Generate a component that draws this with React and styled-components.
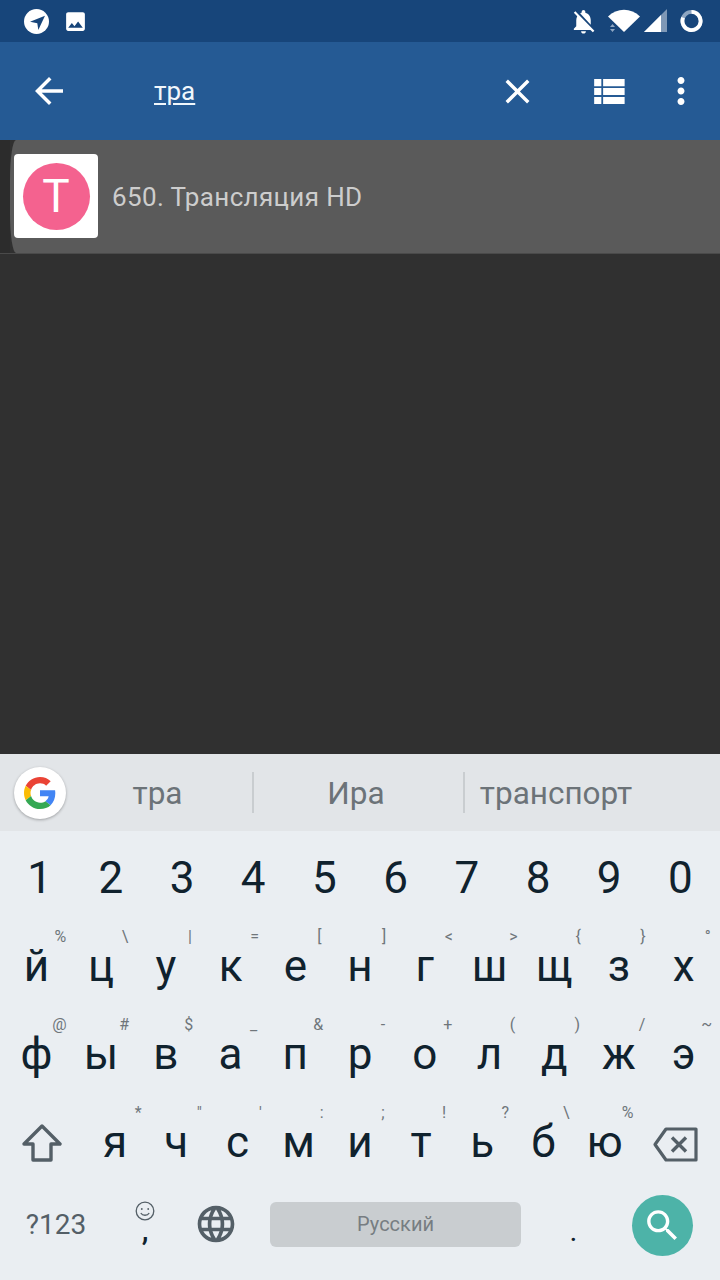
import React from "react";
import styled, { createGlobalStyle } from "styled-components";

const Global = createGlobalStyle`
  html, body { margin: 0; padding: 0; background: #303030; }
  body { font-family: Roboto, "Noto Sans", sans-serif; }
`;

const Screen = styled.div`
  width: 720px; height: 1280px; display: flex; flex-direction: column; overflow: hidden; background: #303030;
`;
const StatusBar = styled.div`
  height: 42px; flex: none; background: #17457a; display: flex; align-items: center; padding: 0 17px 0 24px;
`;
const StatusLeft = styled.div`display: flex; align-items: center; gap: 14px; flex: 1;`;
const StatusRight = styled.div`display: flex; align-items: center;`;
const StatusIcon = styled.div`display: flex; margin-left: ${p => p.$ml || 0}px;`;

const AppBar = styled.div`
  height: 98px; flex: none; background: #255a94; display: flex; align-items: center; color: #fff; padding-right: 17px;
`;
const IconBtn = styled.div`
  width: ${p => p.$w}px; flex: none; display: flex; justify-content: center; align-items: center;
`;
const Query = styled.div`
  flex: 1; padding-left: 56px; font-size: 26px; color: #f1f7fc; text-decoration: underline; text-decoration-thickness: 2px; text-underline-offset: 3px; line-height: 30px;
`;

const Content = styled.div`flex: 1; background: #303030;`;
const ResultRow = styled.div`
  height: 114px; display: flex; align-items: stretch; background: #303030; border-bottom: 1px solid #4a4a4a; box-sizing: border-box;
`;
const Edge = styled.div`width: 10px; flex: none; background: #2c2c2c;`;
const ResultBody = styled.div`
  flex: 1; background: #5a5a5a; display: flex; align-items: center; padding: 0 0 1px 4px; border-top-left-radius: 6px 40px; border-bottom-left-radius: 6px 40px;
`;
const Card = styled.div`
  width: 84px; height: 84px; background: #fff; border-radius: 4px; display: flex; align-items: center; justify-content: center; flex: none;
`;
const Avatar = styled.div`
  width: 67px; height: 67px; border-radius: 50%; background: #f4628f; color: #fff; display: flex; align-items: center; justify-content: center; font-size: 46px; font-weight: 400; line-height: 1;
`;
const Title = styled.div`margin-left: 14px; padding-top: 2px; font-size: 26px; color: #cdcdcd; letter-spacing: 0.35px;`;

const Keyboard = styled.div`height: 526px; flex: none; background: #eaeef2; display: flex; flex-direction: column;`;
const Strip = styled.div`
  height: 77px; flex: none; background: #e2e5e8; display: flex; align-items: center; position: relative;
`;
const GoogleBadge = styled.div`
  width: 52px; height: 52px; margin: 0 11px 0 14px; border-radius: 50%; background: #fff; box-shadow: 0 1px 3px rgba(0,0,0,.3); display: flex; align-items: center; justify-content: center; flex: none;
`;
const Word = styled.div`
  width: ${p => p.$w}px; flex: none; box-sizing: border-box; text-align: center; font-size: 31.5px; color: #6c7378; line-height: 40px; padding: 2px ${p => p.$pr || 0}px 0 0;
`;
const Sep = styled.div`width: 2px; height: 41px; background: #c9cdd0; flex: none;`;

const Rows = styled.div`display: flex; flex-direction: column; padding-top: 2px;`;
const KeyRow = styled.div`
  height: ${p => p.$h || 88}px; display: flex; padding: ${p => p.$pad || "0"};
`;
const Key = styled.div`
  flex: ${p => p.$w ? `0 0 ${p.$w}px` : "1 1 0"}; box-sizing: border-box; position: relative; display: flex; align-items: center; justify-content: center;
  padding: ${p => p.$pt || 0}px 0 ${p => p.$pb || 0}px;
  font-size: 44px; color: #10222e; line-height: 1;
`;
const Hint = styled.span`
  position: absolute; top: 5px; left: calc(50% + ${p => p.$dx}px); transform: translateX(-50%); font-size: 16px; line-height: 20px; color: #6f767b;
`;
const Sym = styled.div`font-size: 28px; color: #545f67; line-height: 1;`;
const EmojiKey = styled.div`display: flex; flex-direction: column; align-items: center; color: #10222e;`;
const Comma = styled.span`font-size: 30px; line-height: 22px; font-weight: 500; color: #10222e; margin-top: -2px;`;
const Space = styled.div`
  width: 251px; height: 45px; background: #c9cdd0; border-radius: 6px; flex: none; align-self: center; display: flex; align-items: center; justify-content: center; font-size: 20px; color: #777d82;
`;
const Dot = styled.div`font-size: 30px; color: #10222e; padding-top: 14px;`;
const SearchFab = styled.div`
  width: 61px; height: 61px; border-radius: 50%; background: #4db3a8; display: flex; align-items: center; justify-content: center;
`;

const Ic = ({ d, size = 24, fill = "#fff" }) => (
  <svg width={size} height={size} viewBox="0 0 24 24" fill={fill}><path d={d} /></svg>
);

const P = {
  back: "M20 11H7.83l5.59-5.59L12 4l-8 8 8 8 1.41-1.41L7.83 13H20v-2z",
  close: "M19 6.41L17.59 5 12 10.59 6.41 5 5 6.41 10.59 12 5 17.59 6.41 19 12 13.41 17.59 19 19 17.59 13.41 12z",
  list: "M4 14h4v-4H4v4zm0 5h4v-4H4v4zM4 9h4V5H4v4zm5 5h12v-4H9v4zm0 5h12v-4H9v4zM9 5v4h12V5H9z",
  more: "M12 8c1.1 0 2-.9 2-2s-.9-2-2-2-2 .9-2 2 .9 2 2 2zm0 2c-1.1 0-2 .9-2 2s.9 2 2 2 2-.9 2-2-.9-2-2-2zm0 6c-1.1 0-2 .9-2 2s.9 2 2 2 2-.9 2-2-.9-2-2-2z",
  photo: "M21 19V5c0-1.1-.9-2-2-2H5c-1.1 0-2 .9-2 2v14c0 1.1.9 2 2 2h14c1.1 0 2-.9 2-2zM8.5 13.5l2.5 3.01L14.5 12l4.5 6H5l3.5-4.5z",
  bell: "M20 18.69L7.84 6.14 5.27 3.49 4 4.76l2.8 2.8v.01c-.52.99-.8 2.16-.8 3.42v5l-2 2v1h13.73l2 2L21 19.72l-1-1.03zM12 22c1.11 0 2-.89 2-2h-4c0 1.11.89 2 2 2zm6-7.32V11c0-3.08-1.64-5.64-4.5-6.32V4c0-.83-.67-1.5-1.5-1.5s-1.5.67-1.5 1.5v.68c-.15.03-.29.08-.42.12-.1.03-.2.07-.3.11h-.01c-.2.08-.4.17-.59.27-.01 0-.01 0-.02.01L18 14.68z",
  search: "M15.5 14h-.79l-.28-.27C15.41 12.59 16 11.11 16 9.5 16 5.91 13.09 3 9.5 3S3 5.91 3 9.5 5.91 16 9.5 16c1.61 0 3.09-.59 4.23-1.57l.27.28v.79l5 4.99L20.49 19l-4.99-5zm-6 0C7.01 14 5 11.99 5 9.5S7.01 5 9.5 5 14 7.01 14 9.5 11.99 14 9.5 14z",
  globe: "M11.99 2C6.47 2 2 6.48 2 12s4.47 10 9.99 10C17.52 22 22 17.52 22 12S17.52 2 11.99 2zm6.93 6h-2.95c-.32-1.25-.78-2.45-1.38-3.56 1.84.63 3.37 1.91 4.33 3.56zM12 4.04c.83 1.2 1.48 2.53 1.91 3.96h-3.82c.43-1.43 1.08-2.76 1.91-3.96zM4.26 14C4.1 13.36 4 12.69 4 12s.1-1.36.26-2h3.38c-.08.66-.14 1.32-.14 2 0 .68.06 1.34.14 2H4.26zm.82 2h2.95c.32 1.25.78 2.45 1.38 3.56-1.84-.63-3.37-1.9-4.33-3.56zm2.95-8H5.08c.96-1.66 2.49-2.93 4.33-3.56C8.81 5.55 8.35 6.75 8.03 8zM12 19.96c-.83-1.2-1.48-2.53-1.91-3.96h3.82c-.43 1.43-1.08 2.76-1.91 3.96zM14.34 14H9.66c-.09-.66-.16-1.32-.16-2 0-.68.07-1.35.16-2h4.68c.09.65.16 1.32.16 2 0 .68-.07 1.34-.16 2zm.25 5.56c.6-1.11 1.06-2.31 1.38-3.56h2.95c-.96 1.65-2.49 2.93-4.33 3.56zM16.36 14c.08-.66.14-1.32.14-2 0-.68-.06-1.34-.14-2h3.38c.16.64.26 1.31.26 2s-.1 1.36-.26 2h-3.38z",
};

const TelegramBadge = () => (
  <svg width="25" height="25" viewBox="0 0 25 25">
    <circle cx="12.5" cy="12.5" r="12.5" fill="#fff" />
    <path d="M21 6.7 L6 12.7 L13.3 14.3 L14.3 21 Z" fill="#17457a" />
  </svg>
);
const Wifi = () => (
  <svg width="32" height="24" viewBox="0 0 32 24">
    <path d="M0 7.5 C9 -1.5 23 -1.5 32 7.5 L16 23 Z" fill="#fff" />
    <path d="M2 18l2.5-3 2.5 3zM2 20l2.5 3 2.5-3z" fill="#8ea6c2" />
  </svg>
);
const Signal = () => (
  <svg width="23" height="24" viewBox="0 0 23 24">
    <path d="M0 23 L23 0 V23 Z" fill="#7f98b6" />
    <path d="M0 23 L17 6 V23 Z" fill="#fff" />
  </svg>
);
const Ring = () => (
  <svg width="23" height="24" viewBox="0 0 24 24">
    <circle cx="12" cy="12" r="9.5" fill="none" stroke="#8ea6c2" strokeWidth="4" />
    <path d="M12 2.5 A9.5 9.5 0 1 1 3.2 8.5" fill="none" stroke="#fff" strokeWidth="4" />
  </svg>
);
const GoogleG = () => (
  <svg width="32" height="32" viewBox="0 0 48 48">
    <path fill="#EA4335" d="M24 9.5c3.54 0 6.71 1.22 9.21 3.6l6.85-6.85C35.9 2.38 30.47 0 24 0 14.62 0 6.51 5.38 2.56 13.22l7.98 6.19C12.43 13.72 17.74 9.5 24 9.5z" />
    <path fill="#4285F4" d="M46.98 24.55c0-1.57-.15-3.09-.38-4.55H24v9.02h12.94c-.58 2.96-2.26 5.48-4.78 7.18l7.73 6c4.51-4.18 7.09-10.36 7.09-17.65z" />
    <path fill="#FBBC05" d="M10.53 28.59c-.48-1.45-.76-2.99-.76-4.59s.27-3.14.76-4.59l-7.98-6.19C.92 16.46 0 20.12 0 24c0 3.88.92 7.54 2.56 10.78l7.97-6.19z" />
    <path fill="#34A853" d="M24 48c6.48 0 11.93-2.13 15.89-5.81l-7.73-6c-2.15 1.45-4.92 2.3-8.16 2.3-6.26 0-11.57-4.22-13.47-9.91l-7.98 6.19C6.51 42.62 14.62 48 24 48z" />
  </svg>
);
const Shift = () => (
  <svg width="40" height="38" viewBox="0 0 40 38" fill="none" stroke="#545f67" strokeWidth="3.4" strokeLinejoin="round">
    <path d="M20 2 L38 20 H29 V36 H11 V20 H2 Z" />
  </svg>
);
const Backspace = () => (
  <svg width="45" height="35" viewBox="0 0 45 35" fill="none" stroke="#545f67" strokeLinejoin="round">
    <path d="M43 2 H13 L2 17.5 L13 33 H43 Z" strokeWidth="3.2" />
    <path d="M19 10.5 L33 24.5 M33 10.5 L19 24.5" strokeWidth="3.4" />
  </svg>
);
const Smile = () => (
  <svg width="20" height="20" viewBox="0 0 20 20" fill="none" stroke="#545f67" strokeWidth="1.3">
    <circle cx="10" cy="10" r="8.8" />
    <circle cx="6.8" cy="8" r=".9" fill="#545f67" stroke="none" />
    <circle cx="13.2" cy="8" r=".9" fill="#545f67" stroke="none" />
    <path d="M5.8 12 C7.5 15 12.5 15 14.2 12" />
  </svg>
);

const digits = "1234567890".split("");
const row2 = [["й","%"],["ц","\\"],["у","|"],["к","="],["е","["],["н","]"],["г","<"],["ш",">"],["щ","{"],["з","}"],["х","°"]];
const row3 = [["ф","@"],["ы","#"],["в","$"],["а","_"],["п","&"],["р","-"],["о","+"],["л","("],["д",")"],["ж","/"],["э","~"]];
const row4 = [["я","*"],["ч","\""],["с","'"],["м",":"],["и",";"],["т","!"],["ь","?"],["б","\\"],["ю","%"]];

export default function App() {
  return (
    <Screen>
      <Global />
      <StatusBar>
        <StatusLeft>
          <TelegramBadge />
          <Ic d={P.photo} size={25} />
        </StatusLeft>
        <StatusRight>
          <StatusIcon><Ic d={P.bell} size={29} /></StatusIcon>
          <StatusIcon $ml={10}><Wifi /></StatusIcon>
          <StatusIcon $ml={4}><Signal /></StatusIcon>
          <StatusIcon $ml={13}><Ring /></StatusIcon>
        </StatusRight>
      </StatusBar>
      <AppBar>
        <IconBtn $w={98}><Ic d={P.back} size={42} /></IconBtn>
        <Query>тра</Query>
        <IconBtn $w={80}><Ic d={P.close} size={41} /></IconBtn>
        <IconBtn $w={102}><Ic d={P.list} size={43} /></IconBtn>
        <IconBtn $w={44}><Ic d={P.more} size={42} /></IconBtn>
      </AppBar>
      <Content>
        <ResultRow>
          <Edge />
          <ResultBody>
            <Card><Avatar>T</Avatar></Card>
            <Title>650. Трансляция HD</Title>
          </ResultBody>
        </ResultRow>
      </Content>
      <Keyboard>
        <Strip>
          <GoogleBadge><GoogleG /></GoogleBadge>
          <Word $w={175} $pr={14}>тра</Word>
          <Sep />
          <Word $w={209} $pr={5}>Ира</Word>
          <Sep />
          <Word $w={182}>транспорт</Word>
        </Strip>
        <Rows>
          <KeyRow $h={89} $pad="0 4px">
            {digits.map(d => <Key key={d}>{d}</Key>)}
          </KeyRow>
          <KeyRow $pad="0 4px">
            {row2.map(([k, h]) => <Key key={k}>{k}<Hint $dx={24}>{h}</Hint></Key>)}
          </KeyRow>
          <KeyRow $pad="0 4px">
            {row3.map(([k, h]) => <Key key={k}>{k}<Hint $dx={23}>{h}</Hint></Key>)}
          </KeyRow>
          <KeyRow>
            <Key $w={84.5} $pt={2}><Shift /></Key>
            {row4.map(([k, h]) => <Key key={k} $w={61.2}>{k}<Hint $dx={23}>{h}</Hint></Key>)}
            <Key $w={81.4} $pt={4}><Backspace /></Key>
          </KeyRow>
          <KeyRow $h={76}>
            <Key $w={112} $pt={2}><Sym>?123</Sym></Key>
            <Key $w={66} $pb={6}><EmojiKey><Smile /><Comma>,</Comma></EmojiKey></Key>
            <Key $w={76}><Ic d={P.globe} size={44} fill="#545f67" /></Key>
            <Key $w={16} />
            <Space>Русский</Space>
            <Key $w={105}><Dot>.</Dot></Key>
            <Key $w={72} $pt={3}><SearchFab><Ic d={P.search} size={41} /></SearchFab></Key>
          </KeyRow>
        </Rows>
      </Keyboard>
    </Screen>
  );
}
